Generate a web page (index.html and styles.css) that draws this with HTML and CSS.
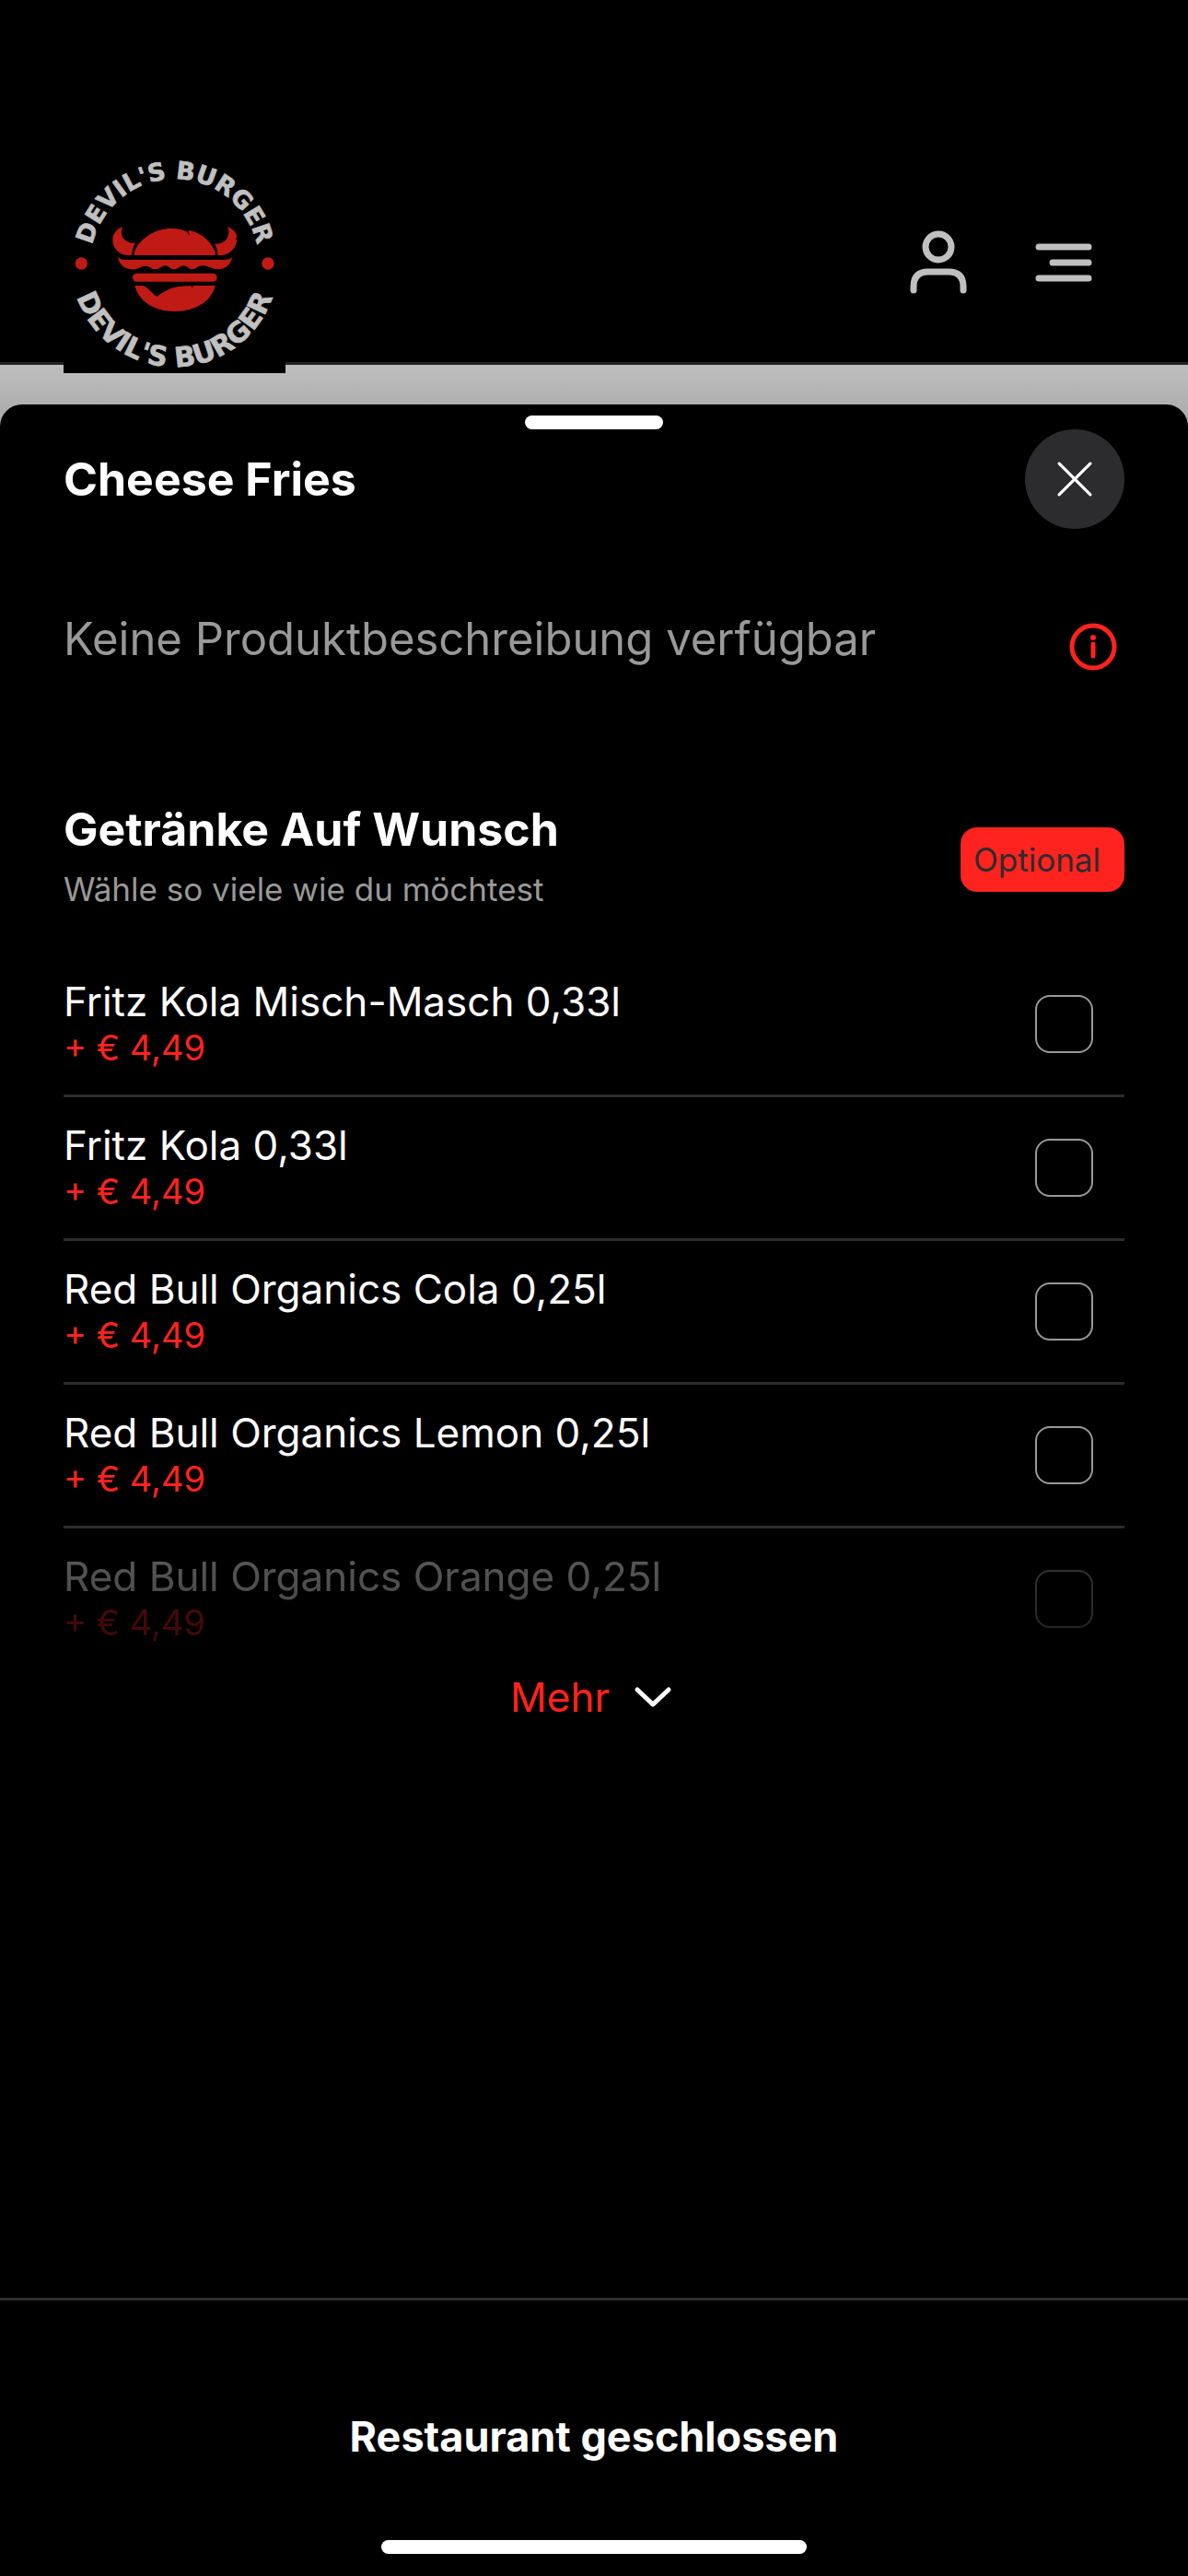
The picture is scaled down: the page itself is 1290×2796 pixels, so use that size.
FILE: index.html
```html
<!DOCTYPE html>
<html lang="de">
<head>
  <meta charset="utf-8">
  <meta name="viewport" content="width=device-width, initial-scale=1">
  <title>Devil's Burger – Cheese Fries</title>
  <link rel="stylesheet" href="styles.css">
</head>
<body>
  <header class="topbar">
    <a class="logo" href="#" aria-label="Devil's Burger">
      <svg viewBox="57 42 723 723">
        <rect x="57" y="42" width="723" height="723" fill="#000"/>
        <defs>
          <path id="arc-top" d="M144 438V408A275 275 0 0 1 694 408V438"/>
          <path id="arc-bottom" d="M82 378V408A337 337 0 0 0 756 408V378"/>
        </defs>
        <g class="logo-text">
          <text class="logo-top"><textPath href="#arc-top" startOffset="50%">DEVIL'S BURGER</textPath></text>
          <text class="logo-bottom"><textPath href="#arc-bottom" startOffset="50%">DEVIL'S BURGER</textPath></text>
        </g>
        <g fill="#c01a15">
          <circle cx="115" cy="408" r="20"/>
          <circle cx="723" cy="408" r="20"/>
          <path d="M249 288C222 298 212 325 219 345C228 373 252 384 280 381Q280 358 291 341Q268 344 253 328C244 317 244 301 249 288Z"/>
          <path d="M591 288C617 298 628 320 617 328L622 331C618 365 590 384 559 381Q559 358 549 344Q575 345 587 330C597 317 597 301 591 288Z"/>
          <path d="M289 381C284 378 290 362 299 349C326 311 370 294 408 294C430 294 450 299 459 305L467 317L464 300C505 306 536 335 551 370Q554 381 549 381Z"/>
          <path d="M234 387Q242 396 256 396H583Q598 396 606 387C603 410 585 427 560 427C540 427 531 416 512 415C493 414 490 427 476 427C465 427 459 415 448 415C437 415 430 427 417 427C404 427 400 415 389 415C376 415 371 427 355 427C341 427 340 417 325 416C308 416 304 427 281 427C255 427 237 410 234 387Z"/>
          <rect x="282" y="440" width="275" height="27" rx="13"/>
          <path d="M289 480H315C330 484 342 502 361 516C390 494 414 483 455 481H474L476 489L479 480H551C540 530 487 564 420 564C352 564 303 532 289 480Z"/>
        </g>
      </svg>
    </a>
    <nav class="topbar-actions">
      <button class="icon-button" type="button" aria-label="Konto">
        <svg viewBox="0 0 84 84" class="stroke-icon">
          <circle cx="42" cy="25" r="14"/>
          <path d="M15 72V68Q15 52 31 52H53Q69 52 69 68V72"/>
        </svg>
      </button>
      <button class="icon-button" type="button" aria-label="Menü">
        <svg viewBox="0 0 84 84" class="stroke-icon">
          <path d="M15 25H69M30 42H69M15 59H69"/>
        </svg>
      </button>
    </nav>
  </header>

  <div class="backdrop">
    <main class="sheet">
      <div class="handle"></div>
      <div class="content">
        <div class="title-row">
          <h1 class="heading">Cheese Fries</h1>
          <button class="close-button" type="button" aria-label="Schließen">
            <svg viewBox="0 0 36 36"><path d="M2 2L34 34M34 2L2 34"/></svg>
          </button>
        </div>

        <div class="description-row">
          <p class="description">Keine Produktbeschreibung verfügbar</p>
          <button class="info-button" type="button" aria-label="Produktinfo">
            <svg viewBox="0 0 52 52">
              <circle cx="26" cy="26" r="23"/>
              <path d="M26 23V36"/>
              <circle class="info-dot" cx="26" cy="16" r="3"/>
            </svg>
          </button>
        </div>

        <section>
          <div class="group-head">
            <div>
              <h2 class="heading">Getränke Auf Wunsch</h2>
              <p class="hint">Wähle so viele wie du möchtest</p>
            </div>
            <span class="badge">Optional</span>
          </div>

          <ul class="options">
            <li><label class="option"><span class="label"><span class="name">Fritz Kola Misch-Masch 0,33l</span><span class="price">+ € 4,49</span></span><input type="checkbox"></label></li>
            <li><label class="option"><span class="label"><span class="name">Fritz Kola 0,33l</span><span class="price">+ € 4,49</span></span><input type="checkbox"></label></li>
            <li><label class="option"><span class="label"><span class="name">Red Bull Organics Cola 0,25l</span><span class="price">+ € 4,49</span></span><input type="checkbox"></label></li>
            <li><label class="option"><span class="label"><span class="name">Red Bull Organics Lemon 0,25l</span><span class="price">+ € 4,49</span></span><input type="checkbox"></label></li>
            <li class="faded"><label class="option"><span class="label"><span class="name">Red Bull Organics Orange 0,25l</span><span class="price">+ € 4,49</span></span><input type="checkbox"></label></li>
          </ul>

          <button class="more" type="button">
            Mehr
            <svg viewBox="0 0 54 30"><path d="M10 7L27 23L44 7"/></svg>
          </button>
        </section>
      </div>

      <footer class="footer">
        <p class="status">Restaurant geschlossen</p>
        <div class="home-indicator"></div>
      </footer>
    </main>
  </div>
</body>
</html>
```

FILE: styles.css
```css
* {
  box-sizing: border-box;
}

body {
  margin: 0;
  min-height: 100vh;
  display: flex;
  flex-direction: column;
  background: #000;
  color: #fff;
  font-family: Inter, "Liberation Sans", sans-serif;
}

h1, h2, p, ul {
  margin: 0;
  padding: 0;
}

button {
  margin: 0;
  padding: 0;
  border: 0;
  background: none;
  color: inherit;
  font: inherit;
}

svg {
  display: block;
}

/* Top bar */

.topbar {
  display: flex;
  justify-content: space-between;
  align-items: center;
  padding: 164px 93px 0 69px;
  border-bottom: 3px solid #222224;
}

.logo {
  width: 241px;
  margin-bottom: -12px;
  z-index: 1;
}

.logo-text {
  fill: #c0c0c0;
  stroke: #c0c0c0;
  stroke-width: 2;
  font-family: "DejaVu Sans", sans-serif;
  font-weight: 700;
  text-anchor: middle;
}

.logo-top {
  font-size: 80px;
}

.logo-bottom {
  font-size: 90px;
}

.topbar-actions {
  display: flex;
  gap: 52px;
  padding-top: 12px;
}

.icon-button svg {
  width: 84px;
}

.stroke-icon {
  fill: none;
  stroke: #c0c0c0;
  stroke-width: 7;
  stroke-linecap: round;
}

/* Sheet */

.backdrop {
  flex: 1;
  display: flex;
  flex-direction: column;
  padding-top: 43px;
  background: linear-gradient(#bebebe, #a4a4a4 80px);
}

.sheet {
  flex: 1;
  display: flex;
  flex-direction: column;
  padding-top: 12px;
  border-radius: 24px 24px 0 0;
  background: #000;
}

.handle {
  width: 150px;
  height: 15px;
  margin: 0 auto;
  border-radius: 8px;
  background: #fff;
}

.content {
  flex: 1;
  padding: 0 69px;
}

.title-row,
.description-row,
.group-head,
.option {
  display: flex;
  justify-content: space-between;
  align-items: center;
}

.heading {
  font-size: 50px;
  line-height: 60px;
  font-weight: 700;
}

.close-button {
  display: grid;
  place-items: center;
  width: 108px;
  height: 108px;
  border-radius: 50%;
  background: #2c2c2e;
}

.close-button svg {
  width: 38px;
  fill: none;
  stroke: #fff;
  stroke-width: 3;
  stroke-linecap: round;
}

.description-row {
  align-items: flex-start;
  padding: 90px 8px 0 0;
}

.description {
  color: #999;
  font-size: 49px;
  line-height: 60px;
}

.info-button {
  padding-top: 12px;
}

.info-button svg {
  width: 52px;
  fill: none;
  stroke: #ff231f;
  stroke-width: 5;
  stroke-linecap: round;
}

.info-button .info-dot {
  fill: #ff231f;
  stroke: none;
}

.group-head {
  padding: 142px 0 46px;
}

.hint {
  padding-top: 11px;
  color: #999;
  font-size: 35px;
  line-height: 48px;
}

.badge {
  margin-top: 6px;
  padding: 11px 26px 11px 14px;
  border-radius: 18px;
  background: #ff231f;
  color: #2c2c2e;
  font-size: 35px;
  line-height: 48px;
}

/* Options */

.options {
  list-style: none;
}

.options li {
  border-bottom: 3px solid #2c2c2e;
}

.option {
  min-height: 153px;
  padding-right: 34px;
}

.label {
  padding-bottom: 4px;
}

.name,
.price {
  display: block;
}

.name {
  font-size: 44px;
  line-height: 54px;
}

.price {
  color: #ff231f;
  font-size: 38px;
  line-height: 46px;
}

.option input {
  appearance: none;
  width: 63px;
  height: 63px;
  margin: 0;
  border: 2px solid #999;
  border-radius: 16px;
}

.options .faded {
  border-bottom: 0;
  mask-image: linear-gradient(rgb(0 0 0 / 0.38), rgb(0 0 0 / 0.2));
}

.more {
  display: flex;
  align-items: center;
  gap: 20px;
  margin: 0 auto;
  color: #ff231f;
  font-size: 44px;
  line-height: 60px;
}

.more svg {
  width: 54px;
  fill: none;
  stroke: #fff;
  stroke-width: 5;
  stroke-linecap: round;
  stroke-linejoin: round;
}

/* Footer */

.footer {
  display: flex;
  flex-direction: column;
  align-items: center;
  gap: 84px;
  padding: 120px 69px 24px;
  border-top: 3px solid #2c2c2e;
}

.status {
  font-size: 45px;
  line-height: 56px;
  font-weight: 700;
}

.home-indicator {
  width: 462px;
  max-width: 100%;
  height: 15px;
  border-radius: 8px;
  background: #fff;
}
```
